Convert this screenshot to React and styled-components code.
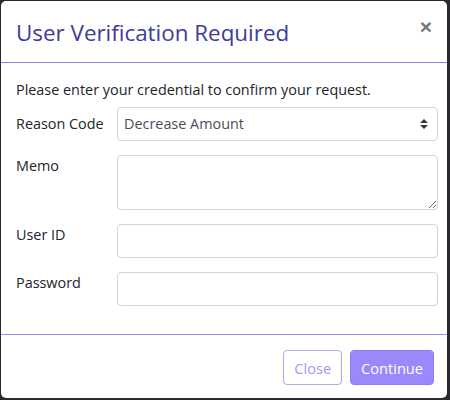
import React from 'react';
import styled, { createGlobalStyle } from 'styled-components';

const Global = createGlobalStyle`
    html, body {
        margin: 0;
        padding: 0;
        background: #2a2a2e;
    }
    * {
        box-sizing: border-box;
    }
`;

const Backdrop = styled.div`
    width: 450px;
    height: 400px;
    padding: 1px 3px 2px 1px;
`;

const Modal = styled.div`
    height: 100%;
    background: #fff;
    border-radius: 5px;
    display: flex;
    flex-direction: column;
    font-family: "Open Sans", "Liberation Sans", sans-serif;
    font-size: 14.4px;
    color: #212529;
`;

const Header = styled.div`
    height: 62px;
    display: flex;
    align-items: center;
    justify-content: space-between;
    padding: 2px 15px 0;
    border-bottom: 1px solid #8b80e3;
`;

const Title = styled.h5`
    margin: 0;
    font-size: 22.4px;
    font-weight: 400;
    color: #3d3c99;
`;

const CloseX = styled.button`
    border: 0;
    background: none;
    padding: 0;
    margin-top: -12px;
    color: #777;
    font-size: 21px;
    font-weight: 700;
    line-height: 1;
    cursor: pointer;
    font-family: "Liberation Sans", sans-serif;
`;

const Body = styled.div`
    flex: 1;
    padding: 17px 9px 0 15px;
`;

const Intro = styled.p`
    margin: 0 0 7px;
    line-height: 20px;
`;

const Row = styled.div`
    display: grid;
    grid-template-columns: 101px 1fr;
    align-items: ${p => (p.top ? 'start' : 'center')};
    margin-bottom: 14px;
`;

const Label = styled.label`
    line-height: 20px;
    padding-top: ${p => (p.top ? '1px' : '0')};
`;

const Field = styled.input`
    display: block;
    height: 34px;
    width: 100%;
    border: 1px solid #ced4da;
    border-radius: 4px;
    padding: 6px 6px;
    font: inherit;
    color: #495057;
    outline: none;
`;

const Memo = styled.textarea`
    display: block;
    height: 55px;
    width: 100%;
    border: 1px solid #ced4da;
    border-radius: 4px;
    padding: 6px 6px;
    font: inherit;
    color: #495057;
    outline: none;
`;

const SelectWrap = styled.div`
    position: relative;
`;

const Select = styled.select`
    display: block;
    appearance: none;
    height: 34px;
    width: 100%;
    border: 1px solid #ced4da;
    border-radius: 4px;
    padding: 4px 6px 6px;
    font: inherit;
    color: #495057;
    background: #fff;
    outline: none;
`;

const Arrows = styled.svg`
    position: absolute;
    right: 10px;
    top: 12px;
    pointer-events: none;
`;

const Footer = styled.div`
    display: flex;
    justify-content: flex-end;
    gap: 8px;
    padding: 15px 13px 13px;
    border-top: 1px solid #9b90ec;
`;

const Button = styled.button`
    height: 35px;
    padding: 0 10px;
    border-radius: 4px;
    font-family: inherit;
    font-size: 14.6px;
    border: 1px solid ${p => (p.primary ? '#8f7ff5' : '#b2a6f7')};
    background: ${p => (p.primary ? '#9a89fb' : '#fff')};
    color: ${p => (p.primary ? '#fff' : '#a597f3')};
`;

export default function App() {
    return (
        <>
            <Global />
            <Backdrop>
                <Modal>
                    <Header>
                        <Title>User Verification Required</Title>
                        <CloseX>×</CloseX>
                    </Header>
                    <Body>
                        <Intro>Please enter your credential to confirm your request.</Intro>
                        <Row>
                            <Label>Reason Code</Label>
                            <SelectWrap>
                                <Select defaultValue="dec">
                                    <option value="dec">Decrease Amount</option>
                                </Select>
                                <Arrows width="8" height="10" viewBox="0 0 8 10">
                                    <path d="M0 4 L4 0 L8 4 Z M0 6 L4 10 L8 6 Z" fill="#343a40" />
                                </Arrows>
                            </SelectWrap>
                        </Row>
                        <Row top>
                            <Label top>Memo</Label>
                            <Memo />
                        </Row>
                        <Row top>
                            <Label top>User ID</Label>
                            <Field type="text" />
                        </Row>
                        <Row top>
                            <Label top>Password</Label>
                            <Field type="password" />
                        </Row>
                    </Body>
                    <Footer>
                        <Button>Close</Button>
                        <Button primary>Continue</Button>
                    </Footer>
                </Modal>
            </Backdrop>
        </>
    );
}
